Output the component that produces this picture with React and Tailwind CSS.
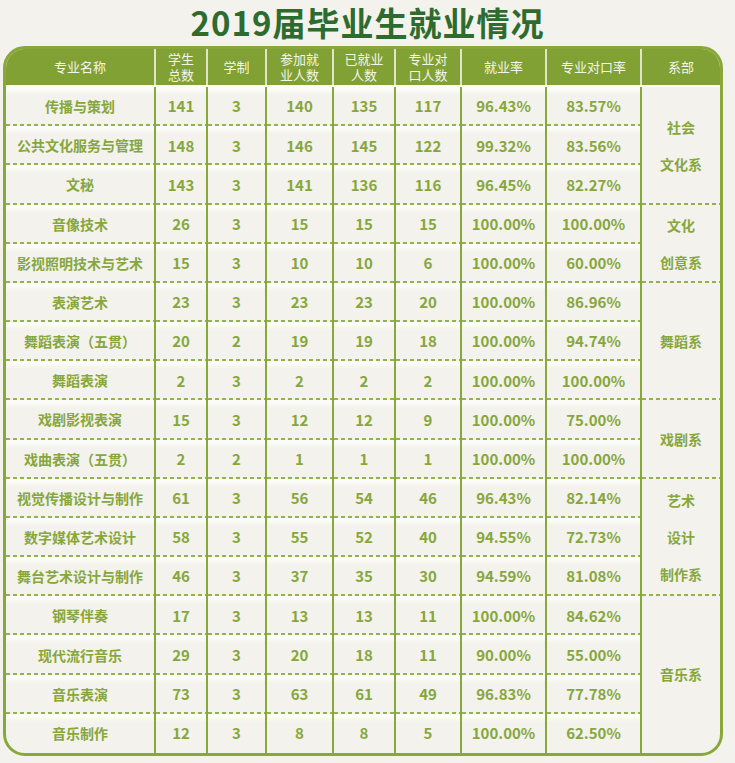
import React from "react";

const rows = [
  ["传播与策划", 141, 3, 140, 135, 117, "96.43%", "83.57%"],
  ["公共文化服务与管理", 148, 3, 146, 145, 122, "99.32%", "83.56%"],
  ["文秘", 143, 3, 141, 136, 116, "96.45%", "82.27%"],
  ["音像技术", 26, 3, 15, 15, 15, "100.00%", "100.00%"],
  ["影视照明技术与艺术", 15, 3, 10, 10, 6, "100.00%", "60.00%"],
  ["表演艺术", 23, 3, 23, 23, 20, "100.00%", "86.96%"],
  ["舞蹈表演（五贯）", 20, 2, 19, 19, 18, "100.00%", "94.74%"],
  ["舞蹈表演", 2, 3, 2, 2, 2, "100.00%", "100.00%"],
  ["戏剧影视表演", 15, 3, 12, 12, 9, "100.00%", "75.00%"],
  ["戏曲表演（五贯）", 2, 2, 1, 1, 1, "100.00%", "100.00%"],
  ["视觉传播设计与制作", 61, 3, 56, 54, 46, "96.43%", "82.14%"],
  ["数字媒体艺术设计", 58, 3, 55, 52, 40, "94.55%", "72.73%"],
  ["舞台艺术设计与制作", 46, 3, 37, 35, 30, "94.59%", "81.08%"],
  ["钢琴伴奏", 17, 3, 13, 13, 11, "100.00%", "84.62%"],
  ["现代流行音乐", 29, 3, 20, 18, 11, "90.00%", "55.00%"],
  ["音乐表演", 73, 3, 63, 61, 49, "96.83%", "77.78%"],
  ["音乐制作", 12, 3, 8, 8, 5, "100.00%", "62.50%"],
];

// dept groups keyed by the row they start on
const depts = {
  0: { lines: ["社会", "文化系"], span: "row-span-3", last: false },
  3: { lines: ["文化", "创意系"], span: "row-span-2", last: false },
  5: { lines: ["舞蹈系"], span: "row-span-3", last: false },
  8: { lines: ["戏剧系"], span: "row-span-2", last: false },
  10: { lines: ["艺术", "设计", "制作系"], span: "row-span-3", last: false },
  13: { lines: ["音乐系"], span: "row-span-4", last: true },
};

const headers = [
  ["专业名称"],
  ["学生", "总数"],
  ["学制"],
  ["参加就", "业人数"],
  ["已就业", "人数"],
  ["专业对", "口人数"],
  ["就业率"],
  ["专业对口率"],
  ["系部"],
];

const cols = "grid-cols-[150px_52px_59px_67px_62px_66px_85px_95px_78px]";

const dashed =
  "[background-image:repeating-linear-gradient(90deg,#93b14c_0_4px,transparent_4px_7px),linear-gradient(to_bottom,#fbfbf7_0,#fbfbf7_3px,transparent_8px)] [background-size:100%_2px,100%_100%] [background-position:bottom,top] bg-no-repeat";
const plain =
  "[background-image:linear-gradient(to_bottom,#fbfbf7_0,#fbfbf7_3px,transparent_8px)] bg-no-repeat";

const App = () => {
  return (
    <div className="min-h-screen w-[735px] bg-[#f3f2ec] font-['Noto_Sans_CJK_SC','Noto_Sans',sans-serif]">
      {/* Title */}
      <div className="h-[46px] pt-[1px] text-center text-[33px] leading-[42px] font-bold tracking-[1px] text-[#2d6b2e]">
        2019届毕业生就业情况
      </div>

      {/* Table */}
      <div className="ml-[3px] w-[720px] border-[3px] border-[#88a83b] rounded-[22px] overflow-hidden">
        {/* Header */}
        <div className={`grid ${cols} h-[38px] bg-[#81a135] border-b-2 border-[#fbfbf7]`}>
          {headers.map((h, i) => (
            <div
              key={i}
              className={`flex flex-col items-center justify-center text-[13px] leading-[16px] text-[#f3f6e8] ${i < 8 ? "border-r-2 border-[#dfe6c8]" : ""}`}
            >
              {h.map((t) => (
                <span key={t}>{t}</span>
              ))}
            </div>
          ))}
        </div>

        {/* Body */}
        <div className={`grid ${cols} grid-rows-[repeat(17,minmax(0,1fr))] h-[666px] text-[#87a73d] font-bold`}>
          {rows.map((r, ri) => {
            const last = ri === rows.length - 1;
            const bg = last ? plain : dashed;
            const dept = depts[ri];
            return (
              <React.Fragment key={ri}>
                {r.map((v, ci) => (
                  <div
                    key={ci}
                    className={`flex items-center justify-center border-r-2 border-[#88a83b] ${bg} ${ci === 0 ? "text-[14px]" : "text-[15px]"}`}
                  >
                    {v}
                  </div>
                ))}
                {dept && (
                  <div
                    className={`${dept.span} flex flex-col items-center justify-center text-[14px] leading-[37px] ${dept.last ? "" : "[background-image:repeating-linear-gradient(90deg,#93b14c_0_4px,transparent_4px_7px)] [background-size:100%_2px] bg-bottom bg-no-repeat"}`}
                  >
                    {dept.lines.map((t) => (
                      <span key={t}>{t}</span>
                    ))}
                  </div>
                )}
              </React.Fragment>
            );
          })}
        </div>
      </div>
    </div>
  );
};

export default App;
